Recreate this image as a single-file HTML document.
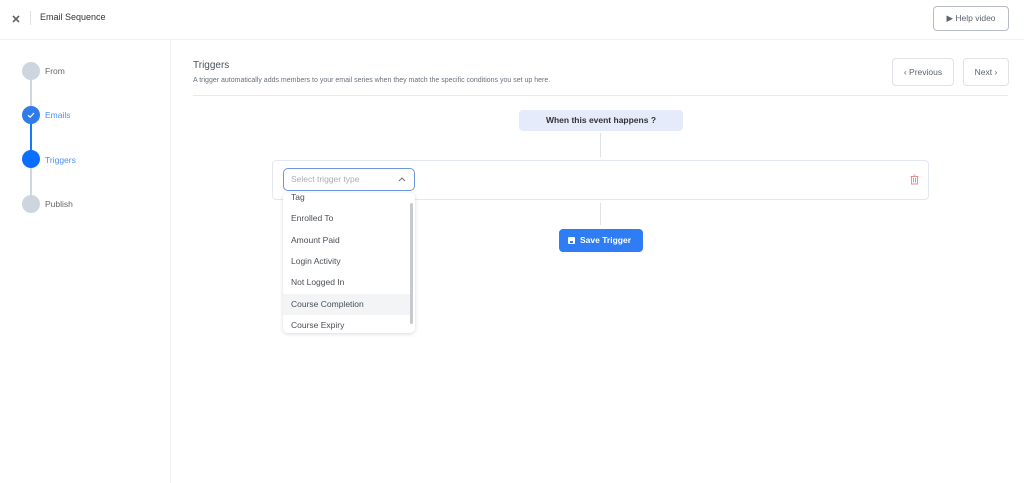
<!DOCTYPE html>
<html><head><style>
*{box-sizing:border-box;margin:0;padding:0}
body{width:1024px;height:483px;background:#fff;font-family:"Liberation Sans",sans-serif;position:relative;overflow:hidden;color:#333}
.a{position:absolute}
.dd div{position:absolute;left:0;width:127px;height:21px;padding-left:8px;line-height:21px;font-size:8.5px;color:#4a4f57}
</style></head><body>
<div class="a" style="left:0;top:39px;width:1024px;height:1px;background:#eef0f3"></div>
<svg class="a" style="left:12px;top:15px" width="8" height="8" viewBox="0 0 8 8"><path d="M1 1L7 7M7 1L1 7" stroke="#666" stroke-width="1.6"/></svg>
<div class="a" style="left:30px;top:11px;width:1px;height:14px;background:#dde1e6"></div>
<div class="a" style="left:40px;top:12px;font-size:9px;color:#333">Email Sequence</div>
<div class="a" style="left:933px;top:6px;width:76px;height:25px;border:1px solid #b7bcc4;border-radius:4px;font-size:8.5px;color:#5b6470;text-align:center;line-height:23px">▶ Help video</div>
<div class="a" style="left:170px;top:40px;width:1px;height:443px;background:#eef0f3"></div>
<div class="a" style="left:30px;top:71px;width:2px;height:44px;background:#cfd6df"></div>
<div class="a" style="left:30px;top:115px;width:2px;height:44px;background:#1677ff"></div>
<div class="a" style="left:30px;top:159px;width:2px;height:45px;background:#cfd6df"></div>
<div class="a" style="left:22px;top:62px;width:18px;height:18px;border-radius:50%;background:#cdd5df"></div>
<div class="a" style="left:22px;top:106px;width:18px;height:18px;border-radius:50%;background:#2f7be8"></div>
<svg class="a" style="left:27px;top:111px" width="8" height="8" viewBox="0 0 8 8"><path d="M1 4.2L3.2 6.2L7 2" fill="none" stroke="#fff" stroke-width="1.2"/></svg>
<div class="a" style="left:22px;top:150px;width:18px;height:18px;border-radius:50%;background:#0a6fff"></div>
<div class="a" style="left:22px;top:195px;width:18px;height:18px;border-radius:50%;background:#cdd5df"></div>
<div class="a" style="left:45px;top:66px;font-size:8.5px;color:#666">From</div>
<div class="a" style="left:45px;top:110px;font-size:8.5px;color:#4b8ef5">Emails</div>
<div class="a" style="left:45px;top:155px;font-size:8.5px;color:#4b8ef5">Triggers</div>
<div class="a" style="left:45px;top:199px;font-size:8.5px;color:#666">Publish</div>
<div class="a" style="left:193px;top:60px;font-size:10px;color:#4a5360">Triggers</div>
<div class="a" style="left:193px;top:77px;font-size:7px;color:#68717d;white-space:nowrap">A trigger automatically adds members to your email series when they match the specific conditions you set up here.</div>
<div class="a" style="left:193px;top:95px;width:815px;height:1px;background:#e8ebef"></div>
<div class="a" style="left:892px;top:58px;width:62px;height:28px;border:1px solid #dfe3e8;border-radius:4px;font-size:8.5px;color:#5b6470;text-align:center;line-height:26px">‹ Previous</div>
<div class="a" style="left:963px;top:58px;width:46px;height:28px;border:1px solid #dfe3e8;border-radius:4px;font-size:8.5px;color:#5b6470;text-align:center;line-height:26px">Next ›</div>
<div class="a" style="left:519px;top:110px;width:164px;height:21px;background:#e6ebfb;border-radius:4px;font-size:8.5px;color:#333;text-align:center;line-height:21px;font-weight:bold">When this event happens ?</div>
<div class="a" style="left:600px;top:133px;width:1px;height:24px;background:#dde1e6"></div>
<div class="a" style="left:272px;top:160px;width:657px;height:40px;border:1px solid #e3e8f0;border-radius:4px"></div>
<div class="a" style="left:283px;top:168px;width:132px;height:23px;border:1.5px solid #6e95e0;border-radius:5px;font-size:8.5px;color:#a8aeb6;line-height:20px;padding-left:7px">Select trigger type</div>
<svg class="a" style="left:398px;top:177px" width="8" height="5" viewBox="0 0 8 5"><path d="M1 4L4 1L7 4" fill="none" stroke="#777" stroke-width="1.1"/></svg>
<svg class="a" style="left:909px;top:174px" width="11" height="11" viewBox="0 0 11 11"><rect x="2.5" y="2.5" width="6" height="7.5" fill="none" stroke="#ef8c8c" stroke-width="1"/><line x1="1.5" y1="2.5" x2="9.5" y2="2.5" stroke="#ef8c8c"/><line x1="4.5" y1="1" x2="6.5" y2="1" stroke="#ef8c8c"/><line x1="4.5" y1="4" x2="4.5" y2="8.5" stroke="#ef8c8c"/><line x1="6.5" y1="4" x2="6.5" y2="8.5" stroke="#ef8c8c"/></svg>
<div class="a" style="left:600px;top:203px;width:1px;height:22px;background:#dde1e6"></div>
<div class="a" style="left:559px;top:229px;width:84px;height:23px;background:#2f7df5;border-radius:4px;color:#fff;font-size:8.5px;font-weight:bold;line-height:23px;padding-left:21px">Save Trigger</div>
<div class="a" style="left:568px;top:237px;width:7px;height:7px;background:#fff;border-radius:1px"><div style="position:absolute;left:2px;top:3.5px;width:3px;height:2px;background:#2f7df5"></div></div>
<div class="a dd" style="left:283px;top:193px;width:132px;height:140px;background:#fff;border-radius:5px;box-shadow:0 1px 4px rgba(0,0,0,.15);overflow:hidden">
<div style="top:-6px">Tag</div>
<div style="top:15px">Enrolled To</div>
<div style="top:37px">Amount Paid</div>
<div style="top:58px">Login Activity</div>
<div style="top:79px">Not Logged In</div>
<div style="top:101px;background:#f3f4f6">Course Completion</div>
<div style="top:122px">Course Expiry</div>
<span style="position:absolute;left:127px;top:10px;width:3px;height:121px;background:#c6c9ce;border-radius:2px"></span>
</div>
</body></html>
